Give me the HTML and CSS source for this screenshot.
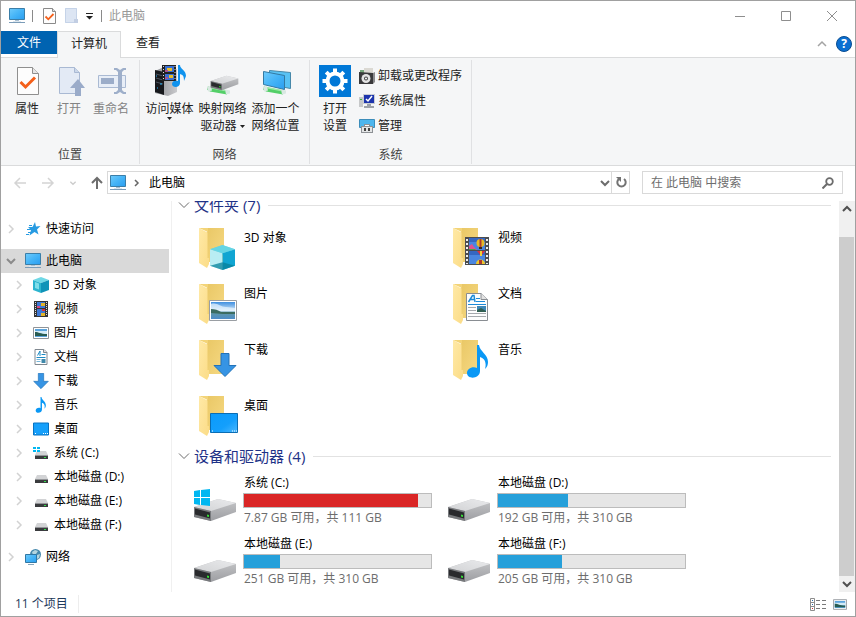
FILE: index.html
```html
<!DOCTYPE html>
<html lang="zh-CN">
<head>
<meta charset="utf-8">
<title>此电脑</title>
<link rel="stylesheet" href="styles.css">
</head>
<body>
<svg class="defs" width="0" height="0" aria-hidden="true">
  <defs>
    <linearGradient id="gScreen" x1="0" y1="0" x2="1" y2="1"><stop offset="0" stop-color="#6fcbfb"/><stop offset=".5" stop-color="#45b4f7"/><stop offset="1" stop-color="#2a9df0"/></linearGradient>
    <linearGradient id="gBack" x1="0" y1="0" x2="1" y2="1"><stop offset="0" stop-color="#e9c765"/><stop offset="1" stop-color="#f6d983"/></linearGradient>
    <linearGradient id="gFront" x1="0" y1="0" x2="1" y2="1"><stop offset="0" stop-color="#ffe9a6"/><stop offset="1" stop-color="#fbdc87"/></linearGradient>
    <linearGradient id="gTop" x1="0" y1="1" x2="1" y2="0"><stop offset="0" stop-color="#d2d3d5"/><stop offset="1" stop-color="#e9eaec"/></linearGradient>
    <linearGradient id="gSide" x1="0" y1="0" x2="0" y2="1"><stop offset="0" stop-color="#c6c7c9"/><stop offset="1" stop-color="#9d9ea2"/></linearGradient>
    <linearGradient id="gSky" x1="0" y1="0" x2="0" y2="1"><stop offset="0" stop-color="#3f8fe0"/><stop offset=".5" stop-color="#cfe6f8"/><stop offset=".65" stop-color="#5f97a8"/><stop offset="1" stop-color="#4d8cc8"/></linearGradient>
    <linearGradient id="gDesk" x1="0" y1="0" x2="1" y2="1"><stop offset="0" stop-color="#0a9bfb"/><stop offset=".6" stop-color="#149ffc"/><stop offset="1" stop-color="#4bb8ff"/></linearGradient>
    <linearGradient id="gTower" x1="0" y1="0" x2="1" y2="0"><stop offset="0" stop-color="#8c8e92"/><stop offset="1" stop-color="#c9cacd"/></linearGradient>
  </defs>
  <symbol id="pc" viewBox="0 0 16 16"><path d="M.5.500h15v11H.5z" fill="url(#gScreen)" stroke="#3b7ea8"/><path d="M6 12h4v1H6z" fill="#a9c0d2"/><path d="M0 14h16v1H0z" fill="#7b9cb8"/><path d="M4 13h8v1H4z" fill="#dbe6ef"/></symbol>
  <symbol id="check" viewBox="0 0 22 28"><path d="M.5.5h15l6 6v21H.5z" fill="#fdfdfd" stroke="#8f8f8f"/><path d="M15.500.5v6h6" fill="#e6e6e6" stroke="#8f8f8f"/><path d="M3.500 15l5 5L18 10.500" fill="none" stroke="#f4601b" stroke-width="3"/></symbol>
  <symbol id="checkS" viewBox="0 0 13 16"><path d="M.5.5h9l3 3v12H.5z" fill="#fdfdfd" stroke="#8a8a8a"/><path d="M9.500.5v3h3" fill="#ddd" stroke="#8a8a8a"/><path d="M2.500 8.500l2.800 2.800L10.500 6" fill="none" stroke="#f4601b" stroke-width="1.800"/></symbol>
  <symbol id="folder" viewBox="0 0 48 48"><path d="M15 3h17v34H14z" fill="url(#gBack)"/><path d="M7 3l8.500 4.500V33H17v6l-2 4-8-5z" fill="url(#gFront)"/><path d="M7 3h9v4z" fill="#f3d478"/></symbol>
  <symbol id="cube" viewBox="0 0 24 24"><path d="M12 0l12 4-12 5L0 4z" fill="#57cfe2"/><path d="M0 4l12 4v16L0 20z" fill="#b9edf3"/><path d="M24 4L12 8v16l12-4z" fill="#10a5d2"/><path d="M0 20l12-3.500L24 20l-12 4z" fill="#078099" opacity=".75"/><path d="M12 0L0 4l12 4 12-4z" fill="#6bd7e6" opacity=".7"/></symbol>
  <symbol id="cubeS" viewBox="0 0 16 16"><path d="M0 3l8-3 8 3-8 3z" fill="#6fd8e6"/><path d="M0 3l8 3v10l-8-3z" fill="#2bb4cf"/><path d="M16 3L8 6v10l8-3z" fill="#0f93b8"/><path d="M2 5l4 1.500v6L2 11z" fill="#7fdde9"/></symbol>
  <symbol id="film" viewBox="0 0 24 28"><path d="M0 0h24v28H0z" fill="#4c4d50"/><path d="M4 1h16v12H4zM4 14h16v13H4z" fill="#4a86e0"/><path d="M4 1h16v4H4zM4 14h16v4H4z" fill="#3567c2"/><ellipse cx="15.500" cy="6" rx="4" ry="4" fill="#e6b927"/><path d="M14.500 2h2v8h-2z" fill="#b03a2c"/><path d="M14 10h3v2h-3z" fill="#3a2417"/><path d="M4 13V9l3-2 2 3 3 3z" fill="#e0528f"/><path d="M4 13v-1h6l1 1z" fill="#45a848"/><path d="M12 14h8l-4 5z" fill="#e0323c"/><path d="M15 14h2v5h-2z" fill="#f1cf37"/><path d="M11 27c0-6 9-6 9 0z" fill="#ecc62b"/><path d="M14 23h3v4h-3z" fill="#b03a2c"/><path d="M2 2v25M22 2v25" stroke="#eee" stroke-width="2" stroke-dasharray="2 2"/></symbol>
  <symbol id="filmS" viewBox="0 0 14 16"><path d="M0 0h14v16H0z" fill="#333436"/><path d="M3 1h8v6H3zM3 8h8v7H3z" fill="#3d78d6"/><path d="M7 2h4v3H7zM7 12h4v3H7z" fill="#e2b52a"/><path d="M3 5h3v2H3z" fill="#d6487f"/><path d="M8 8h3v2H8z" fill="#d8323c"/><path d="M1.500 1v14M12.500 1v14" stroke="#ddd" stroke-dasharray="1 1"/></symbol>
  <symbol id="photo" viewBox="0 0 28 21"><path d="M.5.5h27v20H.5z" fill="#fff" stroke="#9a9ea3"/><path d="M2 2h24v17H2z" fill="url(#gSky)"/><path d="M2 4c6-2 9 3 15 3 4 0 6 1 9 1v3H2z" fill="#eaf5fd" opacity=".7"/><path d="M2 9c4 0 7 1 10 3h14v2H14L2 13z" fill="#3c6c60"/></symbol>
  <symbol id="photoS" viewBox="0 0 16 12"><path d="M.5.5h15v11H.5z" fill="#fff" stroke="#8f9499"/><path d="M2 2h12v8H2z" fill="#5ba4dd"/><path d="M2 4h12v3H2z" fill="#d3ebf7"/><path d="M2 5c4 0 5 2 12 2v2H2z" fill="#285c52"/></symbol>
  <symbol id="doc" viewBox="0 0 22 28"><path d="M.5.500H15l6.500 6v21H.5z" fill="#fdfdfd" stroke="#898d92"/><path d="M15 .5v6h6.500" fill="#e2e2e2" stroke="#898d92"/><path d="M2.500 9L6.500 2.500H8L9 9M4.500 6.500H9" fill="none" stroke="#1c8ad8" stroke-width="1.500"/><path d="M10 5.500h4M10 8.500h9M2 11.500h18" stroke="#1c8ad8"/><path d="M2 14.500h8M2 17.500h8M2 20.500h18M2 23.500h18" stroke="#a5a9ad"/><path d="M11 13h9v6h-9z" fill="#3d87b7"/><path d="M11 17l4-2 5 3v1h-9z" fill="#315f52"/></symbol>
  <symbol id="docS" viewBox="0 0 13 16"><path d="M.5.5h9l3 3v12H.5z" fill="#fff" stroke="#808890"/><path d="M9 .5v3h3.500" fill="#ddd" stroke="#808890"/><path d="M3 6.500L5.500 2v5M7 5.500h4M2 8.500h9" fill="none" stroke="#1b8ac4"/><path d="M2 10.500h4M2 12.500h4" stroke="#75b5d9"/><path d="M7 10h4v4H7z" fill="#3f88aa"/></symbol>
  <symbol id="down" viewBox="0 0 24 24"><path d="M8 .5h8v12h7L12 23.500 1 12.500h7z" fill="#3694e4" stroke="#2272b8"/></symbol>
  <symbol id="note" viewBox="0 0 22 33"><path d="M10 0h2c1 7 9 9 9 17 0 3-1 5-3 7 2-7-1-11-5-12v14c0 8-13 9-13 2 0-4 5-7 10-5z" fill="#0a98f5"/></symbol>
  <symbol id="desk" viewBox="0 0 28 20"><path d="M.5.5h27v19H.5z" fill="url(#gDesk)" stroke="#0b6db3"/><path d="M2 18h1M22 18h1M24 18h1M26 18h1" stroke="#fff"/></symbol>
  <symbol id="deskS" viewBox="0 0 16 13"><path d="M.5.5h15v12H.5z" fill="#16a0fb" stroke="#0873c2"/><path d="M2 11h1M10 11h1M12 11h1M14 11h1" stroke="#fff"/></symbol>
  <symbol id="drive" viewBox="0 0 44 22"><path d="M1 8L25 0l18 4v9L18 22 1 18z" fill="url(#gSide)"/><path d="M1 8L25 0l18 4-25 8z" fill="url(#gTop)"/><path d="M1 8l17 4v10L1 18z" fill="#77797c"/><path d="M2 9.500l15 4v6l-15-4z" fill="#292a2d"/><path d="M14 15.500l2 .5v2l-2-.5z" fill="#35df35"/></symbol>
  <symbol id="driveS" viewBox="0 0 16 16"><path d="M4 6h9l2 4H2z" fill="#d2d3d5"/><path d="M2 10h13v4H2z" fill="#3a3b3e"/><path d="M2 10h13v1H2z" fill="#929497"/><path d="M11 12h2v1h-2z" fill="#32e04a"/></symbol>
  <symbol id="winlogo" viewBox="0 0 16 17"><path d="M0 2l6-1v7H0zM7 1l9-1v8H7zM0 9h6v7l-6-1zM7 9h9v8l-9-1z" fill="#00b7f1"/></symbol>
  <symbol id="right" viewBox="0 0 12 12"><path d="M4 2l4 4-4 4" fill="none" stroke="#d2d2d2" stroke-width="1.500"/></symbol>
  <symbol id="downc" viewBox="0 0 12 12"><path d="M2 4l4 4 4-4" fill="none" stroke="currentColor" stroke-width="2"/></symbol>
  <symbol id="thin" viewBox="0 0 12 12"><path d="M1 3.500l5 5 5-5" fill="none" stroke="#6d6d6d"/></symbol>
  <symbol id="caret" viewBox="0 0 5 3"><path d="M0 0h5L2.500 3z" fill="#222"/></symbol>
  <symbol id="server" viewBox="0 0 32 32"><path d="M1 6l9-4 13 2v23l-9 4-13-3z" fill="url(#gTower)"/><path d="M1 5l9 2v23l-9-3z" fill="#17191d"/><path d="M2 9l7 2M2 13l7 2M2 17l7 2" stroke="#4d5560"/><path d="M2 11h1M6 19h2M3 23h1" stroke="#2cb7ff"/><g><path d="M8 0h14v16H8z" fill="#222"/><path d="M11 1h9v6h-9zM11 9h9v6h-9z" fill="#386fd3"/><path d="M13 3h5v3h-5zM15 10h4v3h-4z" fill="#e8bd28"/><path d="M11 5h3v2h-3zM11 12h3v2h-3z" fill="#a8508f"/><path d="M9.500 1v15M21 1v15" stroke="#ddd" stroke-dasharray="1 2"/></g><path d="M24 0h2c0 4 6 5 6 11l-2 5c0-5-1-6-4-7v9c0 5-8 5-8 1 0-3 3-4 6-3z" fill="#1093ee"/></symbol>
  <symbol id="pipe" viewBox="0 0 24 8"><path d="M1 0l4 1 15 3v4L3 5 0 3z" fill="#53cf68"/><path d="M3 1l15 3" stroke="#9de9a6" stroke-width="1.500"/><path d="M0 0h4l1 4-4 1zM18 3l5 1v3l-4 1z" fill="#d9e8e2"/></symbol>
  <symbol id="netdrive" viewBox="0 0 32 32"><use href="#pipe" x="0" y="21" width="24" height="9"/><use href="#drive" x="3" y="10" width="29" height="16"/></symbol>
  <symbol id="netloc" viewBox="0 0 32 32"><use href="#pipe" x="3" y="21" width="24" height="9"/><path d="M9.500 5.500l21 2v16l-21-4z" fill="#58c2f4" stroke="#4788a9"/><path d="M3.500 6.500l21 4v14l-21-5z" fill="url(#gScreen)" stroke="#3379a2"/></symbol>
  <symbol id="gear" viewBox="0 0 32 32"><path d="M0 0h32v32H0z" fill="#0078d7"/><circle cx="16" cy="16" r="7.500" fill="none" stroke="#fff" stroke-width="4"/><path d="M16 3.500v5M16 23.500v5M3.500 16h5M23.500 16h5M7.200 7.200l3.500 3.500M21.300 21.300l3.500 3.500M24.800 7.200l-3.500 3.500M10.700 21.300l-3.500 3.500" stroke="#fff" stroke-width="4"/></symbol>
</svg>

<div class="window">
  <header class="titlebar">
    <svg width="16" height="16"><use href="#pc"/></svg>
    <span class="bar-sep"></span>
    <button class="quick" aria-label="属性"><svg width="13" height="16"><use href="#checkS"/></svg></button>
    <button class="quick" aria-label="新建文件夹"><svg width="13" height="16" viewBox="0 0 13 16"><path d="M0 0h12v15H0z" fill="#dce5f3"/><path d="M.5.5h11v14H.5z" fill="none" stroke="#c5d3e8"/><path d="M9 11h4v4H9z" fill="#c2cee3"/></svg></button>
    <button class="quick menu" aria-label="自定义快速访问工具栏"><svg width="7" height="7" viewBox="0 0 7 7"><path d="M0 0h7v1H0zM0 3h7L3.500 6.500z" fill="#222"/></svg></button>
    <span class="bar-sep"></span>
    <span class="title">此电脑</span>
    <div class="captions">
      <button aria-label="最小化"><svg width="12" height="12" viewBox="0 0 12 12"><path d="M1 6.500h10" stroke="#8e8e8e"/></svg></button>
      <button aria-label="最大化"><svg width="12" height="12" viewBox="0 0 12 12"><path d="M1.500 1.500h9v9h-9z" fill="none" stroke="#8e8e8e"/></svg></button>
      <button aria-label="关闭"><svg width="12" height="12" viewBox="0 0 12 12"><path d="M1 1l10 10M11 1L1 11" stroke="#8e8e8e"/></svg></button>
    </div>
  </header>

  <div class="tabs">
    <button class="tab file">文件</button>
    <button class="tab active">计算机</button>
    <button class="tab">查看</button>
    <div class="tab-tools">
      <button aria-label="折叠功能区"><svg width="10" height="8" viewBox="0 0 10 8"><path d="M1 6l4-4 4 4" fill="none" stroke="#a3a3a3" stroke-width="1.500"/></svg></button>
      <button class="help" aria-label="帮助">?</button>
    </div>
  </div>

  <div class="ribbon">
    <section class="group place">
      <div class="tools">
        <button class="big"><svg class="ico" viewBox="0 0 32 32"><use href="#check" x="6" y="2" width="22" height="28"/></svg><span>属性</span></button>
        <button class="big" disabled><svg class="ico" viewBox="0 0 32 32"><path d="M6.500 2.500h15l5 5v21h-20z" fill="#e3eaf5" stroke="#a9b9d3"/><path d="M21.500 2.500v5h5" fill="#cbd7e9" stroke="#a9b9d3"/><path d="M25 14l7 9h-4v8h-6v-8h-5z" fill="#9aabc9"/></svg><span>打开</span></button>
        <button class="big" disabled><svg class="ico" viewBox="0 0 32 32"><path d="M3.500 10.500h27v12h-27z" fill="#e8eef7" stroke="#aabad3"/><path d="M6 13h13v6H6z" fill="#9cadc9"/><path d="M19 3h3l3 2 3-2h3v2h-2l-2 2v18l2 2h2v2h-3l-3-2-3 2h-3v-2h2l2-2V7l-2-2h-2z" fill="#9eafca"/></svg><span>重命名</span></button>
      </div>
      <h2>位置</h2>
    </section>
    <section class="group net">
      <div class="tools">
        <button class="big"><svg class="ico"><use href="#server"/></svg><span>访问媒体</span><svg width="5" height="3"><use href="#caret"/></svg></button>
        <button class="big"><svg class="ico"><use href="#netdrive"/></svg><span>映射网络<br>驱动器 <svg class="inline-caret" width="5" height="3"><use href="#caret"/></svg></span></button>
        <button class="big"><svg class="ico"><use href="#netloc"/></svg><span>添加一个<br>网络位置</span></button>
      </div>
      <h2>网络</h2>
    </section>
    <section class="group system">
      <div class="tools">
        <button class="big"><svg class="ico"><use href="#gear"/></svg><span>打开<br>设置</span></button>
        <div class="stack">
          <button class="small"><svg width="16" height="16" viewBox="0 0 16 16"><path d="M1 2h11v4H1z" fill="#75a77a"/><path d="M5 0h9v6H5z" fill="#dbd9d3"/><path d="M0 4l14 1v11H0z" fill="#39393b"/><circle cx="7" cy="10.500" r="4.500" fill="#e3e3e3"/><circle cx="7" cy="10.500" r="2" fill="#444"/><circle cx="7" cy="10.500" r="1" fill="#fff"/><path d="M14 5l2-1v10l-2 2z" fill="#8b8b8d"/></svg>卸载或更改程序</button>
          <button class="small"><svg width="16" height="16" viewBox="0 0 16 16"><path d="M0 4h4v10H0z" fill="#c6c8c9"/><path d="M1 6h2v1H1z" fill="#42b248"/><path d="M4 1h12v10H4z" fill="#c9cdd3"/><path d="M5 2h10v8H5z" fill="#1d35ad"/><path d="M7 6l2 2 4-5" fill="none" stroke="#fff" stroke-width="1.500"/><path d="M8 11h4v2h3v2H5v-2h3z" fill="#9da2a8"/></svg>系统属性</button>
          <button class="small"><svg width="16" height="16" viewBox="0 0 16 16"><path d="M.5 1.500h15v8H.5z" fill="#4db6ee" stroke="#3c8dba"/><path d="M5 6h6v2h3v7H2V8h3z" fill="#8d9195"/><path d="M6 7h4v1H6z" fill="#fff"/><path d="M3 9h10v5H3z" fill="#e3e5e6"/><path d="M5 10h2v3H5zM9 10h2v3H9z" fill="#444"/></svg>管理</button>
        </div>
      </div>
      <h2>系统</h2>
    </section>
  </div>

  <div class="address-row">
    <div class="history">
      <button aria-label="后退"><svg width="14" height="12" viewBox="0 0 14 12"><path d="M7 1L2 6l5 5M2 6h11" fill="none" stroke="#d4d4d4" stroke-width="1.500"/></svg></button>
      <button aria-label="前进"><svg width="14" height="12" viewBox="0 0 14 12"><path d="M7 1l5 5-5 5M12 6H1" fill="none" stroke="#d4d4d4" stroke-width="1.500"/></svg></button>
      <button class="recent" aria-label="最近浏览的位置"><svg width="8" height="8" viewBox="0 0 12 12"><use href="#downc"/></svg></button>
      <button aria-label="上移"><svg width="12" height="14" viewBox="0 0 12 14"><path d="M1 7l5-5 5 5M6 2v11" fill="none" stroke="#6d6d6d" stroke-width="2"/></svg></button>
    </div>
    <div class="address">
      <svg width="16" height="16"><use href="#pc"/></svg>
      <svg class="crumb-arrow" width="6" height="8" viewBox="0 0 6 8"><path d="M1 1l3 3-3 3" fill="none" stroke="#666" stroke-width="1.500"/></svg>
      <button class="crumb">此电脑</button>
      <button class="drop" aria-label="以前的位置"><svg width="12" height="12"><use href="#downc"/></svg></button>
      <button class="refresh" aria-label="刷新"><svg width="12" height="13" viewBox="0 0 12 13"><path d="M9 3a4.200 4.200 0 1 1-5 0" fill="none" stroke="#737373" stroke-width="2"/><path d="M1 1h5v5z" fill="#737373"/></svg></button>
    </div>
    <label class="search">
      <input type="text" aria-label="搜索" placeholder="在 此电脑 中搜索">
      <svg width="12" height="12" viewBox="0 0 12 12"><circle cx="7.500" cy="4.500" r="3.300" fill="none" stroke="#6c6c6c" stroke-width="1.800"/><path d="M5 7l-4.500 4.500" stroke="#6c6c6c" stroke-width="2"/></svg>
    </label>
  </div>

  <div class="body">
    <nav class="nav">
      <a class="row" href="#"><svg class="chev"><use href="#right"/></svg><svg class="i16" viewBox="0 0 16 16"><path d="M10 1l1 4.500 4.500-.5-3.500 3.500 1.500 5-4-2.500-5 3.500 1.500-5.500L3 6h4.500z" fill="#279be2"/><path d="M2 8.500h4M3 11.500h3M1 13.500h3M4 4.500h3" stroke="#279be2"/></svg>快速访问</a>
      <div class="tree">
        <a class="row selected" href="#"><svg class="chev open"><use href="#downc"/></svg><svg class="i16"><use href="#pc"/></svg>此电脑</a>
        <div class="children">
          <a class="row" href="#"><svg class="chev"><use href="#right"/></svg><svg class="i16"><use href="#cubeS"/></svg>3D 对象</a>
          <a class="row" href="#"><svg class="chev"><use href="#right"/></svg><svg class="i16"><use href="#filmS"/></svg>视频</a>
          <a class="row" href="#"><svg class="chev"><use href="#right"/></svg><svg class="i16"><use href="#photoS"/></svg>图片</a>
          <a class="row" href="#"><svg class="chev"><use href="#right"/></svg><svg class="i16"><use href="#docS"/></svg>文档</a>
          <a class="row" href="#"><svg class="chev"><use href="#right"/></svg><svg class="i16"><use href="#down"/></svg>下载</a>
          <a class="row" href="#"><svg class="chev"><use href="#right"/></svg><svg class="i16"><use href="#note"/></svg>音乐</a>
          <a class="row" href="#"><svg class="chev"><use href="#right"/></svg><svg class="i16"><use href="#deskS"/></svg>桌面</a>
          <a class="row" href="#"><svg class="chev"><use href="#right"/></svg><svg class="i16" viewBox="0 0 16 16"><use href="#driveS" width="16" height="16"/><path d="M0 2h3v2H0zM4 2h3v2H4zM0 5h3v2H0zM4 5h3v2H4z" fill="#00b7f1"/></svg>系统 (C:)</a>
          <a class="row" href="#"><svg class="chev"><use href="#right"/></svg><svg class="i16"><use href="#driveS"/></svg>本地磁盘 (D:)</a>
          <a class="row" href="#"><svg class="chev"><use href="#right"/></svg><svg class="i16"><use href="#driveS"/></svg>本地磁盘 (E:)</a>
          <a class="row" href="#"><svg class="chev"><use href="#right"/></svg><svg class="i16"><use href="#driveS"/></svg>本地磁盘 (F:)</a>
        </div>
      </div>
      <a class="row" href="#"><svg class="chev"><use href="#right"/></svg><svg class="i16" viewBox="0 0 16 16"><circle cx="10.500" cy="5.500" r="5.500" fill="#4789ad"/><path d="M7 3l3-2 3 1-2 3-3 1zM12 6l3-1-1 4-2 1z" fill="#b4d5df"/><path d="M.5 5.500h11v8H.5z" fill="url(#gScreen)" stroke="#3077a4"/><path d="M3 15h6v1H3z" fill="#87a6bb"/></svg>网络</a>
    </nav>

    <main class="content">
      <div class="scrolled">
        <h3 class="heading"><svg width="12" height="12"><use href="#thin"/></svg>文件夹 (7)</h3>
        <div class="grid folders">
          <div class="tile"><svg class="i48" viewBox="0 -1 48 48"><use href="#folder"/><use href="#cube" x="18" y="20" width="25" height="25"/></svg><span>3D 对象</span></div>
          <div class="tile"><svg class="i48" viewBox="0 -1 48 48"><use href="#folder"/><use href="#film" x="19" y="12" width="24" height="28"/></svg><span>视频</span></div>
          <div class="tile"><svg class="i48" viewBox="0 -1 48 48"><use href="#folder"/><use href="#photo" x="17" y="19" width="28" height="21"/></svg><span>图片</span></div>
          <div class="tile"><svg class="i48" viewBox="0 -1 48 48"><use href="#folder"/><use href="#doc" x="20" y="12" width="22" height="28"/></svg><span>文档</span></div>
          <div class="tile"><svg class="i48" viewBox="0 -1 48 48"><use href="#folder"/><use href="#down" x="21" y="16" width="24" height="24"/></svg><span>下载</span></div>
          <div class="tile"><svg class="i48" viewBox="0 -1 48 48"><use href="#folder"/><use href="#note" x="21" y="8" width="22" height="33"/></svg><span>音乐</span></div>
          <div class="tile"><svg class="i48" viewBox="0 -1 48 48"><use href="#folder"/><use href="#desk" x="18" y="20" width="28" height="20"/></svg><span>桌面</span></div>
        </div>
        <h3 class="heading"><svg width="12" height="12"><use href="#thin"/></svg>设备和驱动器 (4)</h3>
        <div class="grid drives">
          <div class="drive"><svg class="i48" viewBox="0 0 48 48"><use href="#drive" x="1" y="21" width="44" height="22"/><use href="#winlogo" x="2" y="11" width="16" height="17"/></svg><div class="info"><span>系统 (C:)</span><div class="usage"><div class="fill full" style="width:93%"></div></div><small>7.87 GB 可用，共 111 GB</small></div></div>
          <div class="drive"><svg class="i48" viewBox="0 0 48 48"><use href="#drive" x="1" y="21" width="44" height="22"/></svg><div class="info"><span>本地磁盘 (D:)</span><div class="usage"><div class="fill" style="width:37.500%"></div></div><small>192 GB 可用，共 310 GB</small></div></div>
          <div class="drive"><svg class="i48" viewBox="0 0 48 48"><use href="#drive" x="1" y="21" width="44" height="22"/></svg><div class="info"><span>本地磁盘 (E:)</span><div class="usage"><div class="fill" style="width:19%"></div></div><small>251 GB 可用，共 310 GB</small></div></div>
          <div class="drive"><svg class="i48" viewBox="0 0 48 48"><use href="#drive" x="1" y="21" width="44" height="22"/></svg><div class="info"><span>本地磁盘 (F:)</span><div class="usage"><div class="fill" style="width:34%"></div></div><small>205 GB 可用，共 310 GB</small></div></div>
        </div>
      </div>
    </main>

    <div class="scrollbar">
      <button class="up" aria-label="向上滚动"><svg width="12" height="12"><use href="#downc"/></svg></button>
      <div class="track"><div class="thumb"></div></div>
      <button aria-label="向下滚动"><svg width="12" height="12"><use href="#downc"/></svg></button>
    </div>
  </div>

  <footer class="status">
    <span class="count">11 个项目</span>
    <div class="views">
      <button aria-label="详细信息"><svg width="16" height="13" viewBox="0 0 16 13"><path d="M.5.5h4v12h-4zM.5 4.500h4M.5 8.500h4" fill="none" stroke="#8d8d8d"/><path d="M2 2h1v1H2zM2 6h1v1H2z" fill="#286ba8"/><path d="M2 10h1v1H2z" fill="#c33"/><path d="M6 2.500h4M12 2.500h4M6 6.500h4M12 6.500h4M6 10.500h4M12 10.500h4" stroke="#7a7a7a"/></svg></button>
      <button aria-label="大图标"><svg width="14" height="11"><use href="#photoS"/></svg></button>
    </div>
  </footer>
</div>
</body>
</html>
```
FILE: styles.css
```css
* { box-sizing: border-box; }

body {
  margin: 0;
  font: 12px/18px "Open Sans", "Noto Sans CJK SC", sans-serif;
  color: #000;
  background: #fff;
}

button {
  font: inherit;
  color: inherit;
  background: none;
  border: 0;
  padding: 0;
  margin: 0;
}

a { color: inherit; text-decoration: none; }
svg { flex: none; display: block; }
h2, h3 { margin: 0; font-weight: 400; }
.defs { position: absolute; }

.window {
  display: flex;
  flex-direction: column;
  height: 100vh;
  border: 1px solid #a0a0a0;
  background: #fff;
}

/* Title bar */
.titlebar {
  display: flex;
  align-items: center;
  flex: none;
  height: 30px;
  padding-left: 8px;
}
.bar-sep { width: 1px; height: 12px; margin: 0 7px; background: #8a8a8a; }
.quick { margin-left: 3px; margin-right: 6px; }
.quick.menu { margin: 0 1px 0 2px; }
.title { color: #999; }
.captions { display: flex; align-self: stretch; margin-left: auto; }
.captions button { display: grid; place-items: center; width: 46px; }

/* Tabs */
.tabs {
  display: flex;
  align-items: flex-start;
  flex: none;
  height: 27px;
  border-bottom: 1px solid #dadbdc;
}
.tab { height: 24px; padding: 0 15px; color: #222; }
.tab.file { height: 23px; padding: 0 16px; background: #0063b1; color: #fff; }
.tab.active {
  height: 27px;
  padding: 0 13px 2px;
  border: 1px solid #dadbdc;
  border-bottom: 0;
  background: #f5f6f7;
}
.tab-tools { display: flex; align-items: center; gap: 9px; align-self: stretch; margin-left: auto; padding-right: 3px; }
.help {
  width: 16px;
  height: 16px;
  border: 1px solid #0a4d91;
  border-radius: 50%;
  background: #0b6fd1;
  color: #fff;
  font-weight: 700;
  line-height: 14px;
}

/* Ribbon */
.ribbon {
  display: flex;
  flex: none;
  height: 108px;
  padding: 2px 0 1px;
  background: #f5f6f7;
  border-bottom: 1px solid #dadbdc;
}
.group {
  display: flex;
  flex-direction: column;
  justify-content: space-between;
  padding-top: 5px;
  border-right: 1px solid #e0e1e3;
}
.group h2 { font-size: 12px; text-align: center; color: #444; }
.tools { display: flex; align-items: flex-start; padding: 0 7px 0 5px; }
.net .tools { padding-left: 3px; }
.system .tools { padding: 0 9px 0 4px; }
.big {
  display: flex;
  flex-direction: column;
  align-items: center;
  width: 42px;
  line-height: 17px;
  color: #222;
  white-space: nowrap;
}
.net .big { width: 53px; }
.big:disabled { color: #838383; }
.ico { width: 32px; height: 32px; margin-bottom: 3px; }
.inline-caret { display: inline-block; vertical-align: middle; }
.stack { display: flex; flex-direction: column; gap: 7px; padding: 2px 0 0 3px; }
.small { display: flex; align-items: center; gap: 3px; color: #222; }

/* Address row */
.address-row { display: flex; flex: none; padding: 5px 12px 7px 0; }
.history { display: flex; align-items: center; gap: 14px; padding: 0 4px 0 12px; }
.history .recent { color: #ccc; }
.address {
  display: flex;
  align-items: center;
  flex: 1;
  height: 23px;
  padding-left: 2px;
  border: 1px solid #d9d9d9;
  color: #000;
}
.crumb-arrow { margin: 0 9px 0 8px; }
.drop { margin-left: auto; color: #6c6c6c; }
.refresh { display: grid; place-items: center; align-self: stretch; width: 18px; border-left: 1px solid #d9d9d9; }
.search {
  display: flex;
  align-items: center;
  width: 201px;
  height: 23px;
  margin-left: 12px;
  padding: 0 8px;
  border: 1px solid #d9d9d9;
}
.search input { flex: 1; min-width: 0; padding: 0; border: 0; outline: 0; font: inherit; }
.search input::placeholder { color: #6d6d6d; opacity: 1; }

/* Navigation pane */
.body { display: flex; flex: 1; min-height: 0; }
.nav { flex: none; width: 171px; padding: 16px 2px 0 0; border-right: 1px solid #f0f0f0; }
.tree { margin: 8px 0; }
.row { display: flex; align-items: center; height: 24px; padding-left: 4px; }
.row.selected { background: #d9d9d9; }
.children .row { padding-left: 12px; }
.chev { width: 12px; height: 12px; margin-right: 8px; }
.chev.open { color: #8b8b8b; }
.i16 { width: 16px; height: 16px; margin-right: 5px; }

/* Content */
.content { flex: 1; min-width: 0; overflow: hidden; }
.scrolled { margin-top: -12px; padding: 0 8px 0 6px; }
.heading {
  display: flex;
  align-items: center;
  gap: 4px;
  padding: 6px 0 9px;
  font-size: 15px;
  line-height: 20px;
  color: #1e3287;
}
.heading::after { content: ""; flex: 1; height: 1px; margin-left: 4px; background: #e2e2e2; }
.grid { display: grid; grid-template-columns: repeat(auto-fill, 254px); padding-left: 14px; }
.folders { row-gap: 8px; }
.drives { row-gap: 10px; }
.tile, .drive { display: flex; gap: 3px; }
.tile span { padding: 5px 0 0 1px; }
.i48 { width: 48px; height: 48px; }
.drive { align-items: flex-end; line-height: 16px; }
.info { display: flex; flex-direction: column; flex: 1; gap: 2px; padding-right: 14px; }
.info span, .info small { padding-left: 1px; }
.info small { font-size: 12px; color: #6d6d6d; }
.usage { height: 15px; border: 1px solid #bcbcbc; background: #e6e6e6; }
.fill { height: 100%; background: #26a0da; }
.fill.full { background: #da2626; }

/* Scroll bar */
.scrollbar { display: flex; flex-direction: column; flex: none; width: 16px; background: #f0f0f0; color: #505050; }
.scrollbar button { display: grid; place-items: center; height: 16px; }
.scrollbar .up svg { transform: rotate(180deg); }
.track { display: flex; flex-direction: column; flex: 1; padding: 20px 1px 0 0; }
.thumb { flex: 1; background: #cdcdcd; }

/* Status bar */
.status { display: flex; align-items: center; justify-content: space-between; flex: none; height: 24px; padding: 0 8px 0 14px; }
.count { padding-right: 10px; border-right: 1px solid #ededed; color: #1e395b; }
.views { display: flex; align-items: center; gap: 7px; }
```
